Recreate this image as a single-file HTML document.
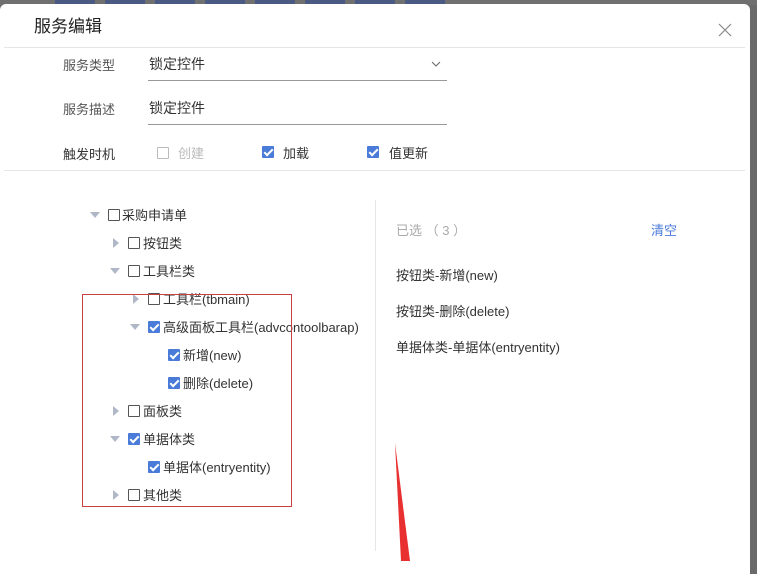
<!DOCTYPE html>
<html><head><meta charset="utf-8"><style>
*{margin:0;padding:0;box-sizing:border-box}
body{width:757px;height:561px;overflow:hidden;background:#6a6a6a;position:relative;font-family:"Liberation Sans","Noto Sans CJK SC",sans-serif;font-size:13px;color:#333}
.topbar{position:absolute;left:0;top:0;width:757px;height:5px;background:#707070}
.tb{position:absolute;top:0;height:5px;background:#4a5a82}
.dlg{position:absolute;left:0;top:4px;width:750px;height:570px;background:#fff;border-radius:6px 6px 0 0}
.a{position:absolute;white-space:nowrap;margin-top:-2px}
.n{margin-top:0}
.hr{position:absolute;height:1px;background:#e6e6e6}
.cb{position:absolute;width:12px;height:12px;border:1px solid #555;background:#fff;border-radius:1px}
.cb.on{background:#4a7bd9;border-color:#4a7bd9}
.cb.on:after{content:"";position:absolute;left:3px;top:0px;width:3px;height:7px;border:solid #fff;border-width:0 2px 2px 0;transform:rotate(45deg)}
.cb.dis{border-color:#bbb}
.tri{position:absolute;width:0;height:0}
.tr{border-top:5px solid transparent;border-bottom:5px solid transparent;border-left:6px solid #b0b8c8}
.td{border-left:5px solid transparent;border-right:5px solid transparent;border-top:6px solid #b0b8c8}
.lbl{color:#555}
</style></head><body>
<div class="topbar"></div>
<div class="tb" style="left:55px;width:40px"></div><div class="tb" style="left:105px;width:40px"></div><div class="tb" style="left:155px;width:40px"></div><div class="tb" style="left:205px;width:40px"></div><div class="tb" style="left:255px;width:40px"></div><div class="tb" style="left:305px;width:40px"></div><div class="tb" style="left:355px;width:40px"></div><div class="tb" style="left:405px;width:40px"></div>
<div class="dlg"></div>
<div class="a" style="left:34px;top:14px;font-size:17px;color:#222">服务编辑</div>
<svg class="a n" style="left:718px;top:23px" width="14" height="14"><path d="M1 1L13 13M13 1L1 13" stroke="#888" stroke-width="1.2"/></svg>
<div class="hr" style="left:4px;top:47px;width:741px"></div>
<div class="a lbl" style="left:63px;top:57px">服务类型</div>
<div class="a" style="left:149px;top:56px;font-size:14px">锁定控件</div>
<svg class="a n" style="left:431px;top:61px" width="10" height="7"><path d="M1 1L5 5L9 1" stroke="#666" fill="none"/></svg>
<div class="hr" style="left:148px;top:80px;width:299px;background:#999"></div>
<div class="a lbl" style="left:63px;top:101px">服务描述</div>
<div class="a" style="left:149px;top:100px;font-size:14px">锁定控件</div>
<div class="hr" style="left:148px;top:124px;width:299px;background:#999"></div>
<div class="a" style="left:63px;top:146px;color:#333">触发时机</div>
<div class="cb dis" style="left:157px;top:147px"></div><div class="a" style="left:178px;top:145px;color:#bbb">创建</div>
<div class="cb on" style="left:262px;top:146px"></div><div class="a" style="left:283px;top:145px">加载</div>
<div class="cb on" style="left:367px;top:146px"></div><div class="a" style="left:389px;top:145px">值更新</div>
<div class="hr" style="left:4px;top:170px;width:741px"></div>
<div class="hr" style="left:375px;top:200px;width:1px;height:351px"></div>

<div class="tri td" style="left:90px;top:212px"></div><div class="cb" style="left:108px;top:209px"></div><div class="a" style="left:122px;top:207px">采购申请单</div>
<div class="tri tr" style="left:113px;top:238px"></div><div class="cb" style="left:128px;top:237px"></div><div class="a" style="left:143px;top:235px">按钮类</div>
<div class="tri td" style="left:110px;top:268px"></div><div class="cb" style="left:128px;top:265px"></div><div class="a" style="left:143px;top:263px">工具栏类</div>
<div class="tri tr" style="left:133px;top:294px"></div><div class="cb" style="left:148px;top:293px"></div><div class="a" style="left:163px;top:291px">工具栏(tbmain)</div>
<div class="tri td" style="left:130px;top:324px"></div><div class="cb on" style="left:148px;top:321px"></div><div class="a" style="left:163px;top:319px">高级面板工具栏(advcontoolbarap)</div>
<div class="cb on" style="left:168px;top:349px"></div><div class="a" style="left:183px;top:347px">新增(new)</div>
<div class="cb on" style="left:168px;top:377px"></div><div class="a" style="left:183px;top:375px">删除(delete)</div>
<div class="tri tr" style="left:113px;top:406px"></div><div class="cb" style="left:128px;top:405px"></div><div class="a" style="left:143px;top:403px">面板类</div>
<div class="tri td" style="left:110px;top:436px"></div><div class="cb on" style="left:128px;top:433px"></div><div class="a" style="left:143px;top:431px">单据体类</div>
<div class="cb on" style="left:148px;top:461px"></div><div class="a" style="left:163px;top:459px">单据体(entryentity)</div>
<div class="tri tr" style="left:113px;top:490px"></div><div class="cb" style="left:128px;top:489px"></div><div class="a" style="left:143px;top:487px">其他类</div>
<div class="a n" style="left:82px;top:294px;width:210px;height:213px;border:1px solid #c84040"></div>

<div class="a" style="left:396px;top:222px;color:#aaa">已选 （ 3 ）</div>
<div class="a" style="left:651px;top:222px;color:#4a7bd9">清空</div>
<div class="a" style="left:396px;top:267px">按钮类-新增(new)</div>
<div class="a" style="left:396px;top:303px">按钮类-删除(delete)</div>
<div class="a" style="left:396px;top:339px">单据体类-单据体(entryentity)</div>
<svg class="a n" style="left:390px;top:440px" width="30" height="121"><path d="M5 3L20 121L11 121Z" fill="#e83030"/></svg>
</body></html>
